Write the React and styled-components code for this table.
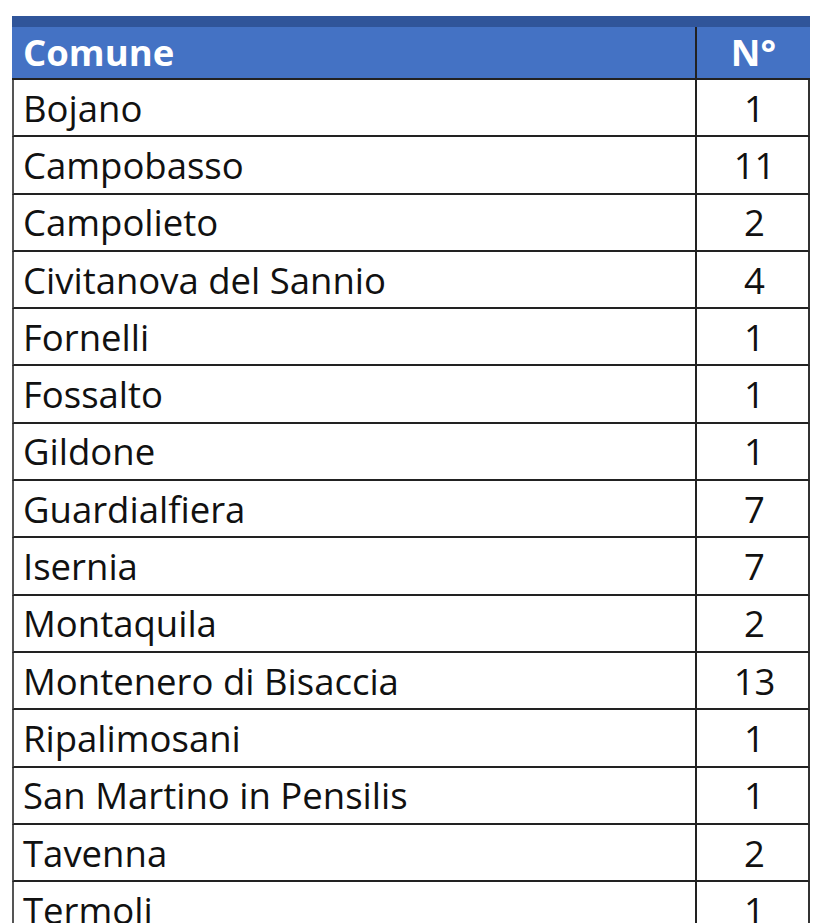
import React from 'react';
import styled, { createGlobalStyle } from 'styled-components';

const GlobalStyle = createGlobalStyle`
  body {
    margin: 0;
    background: #fff;
  }
`;

const Page = styled.div`
  padding: 16px 0 0 12px;
  height: 923px;
  box-sizing: border-box;
  overflow: hidden;
`;

const Sheet = styled.div`
  width: 798px;
  font-family: "Open Sans", "Liberation Sans", sans-serif;
  font-size: 36.5px;
  color: #111;
`;

const TopStrip = styled.div`
  height: 11px;
  background: #30559a;
`;

const Row = styled.div`
  display: grid;
  grid-template-columns: 683px 115px;
  height: ${(p) => (p.$head ? '53px' : '57.3px')};
  box-sizing: border-box;
  background: ${(p) => (p.$head ? '#4472c4' : '#fff')};
  color: ${(p) => (p.$head ? '#fff' : '#111')};
  font-weight: ${(p) => (p.$head ? 700 : 400)};
  border-bottom: 2px solid #222;
  border-left: ${(p) => (p.$head ? 'none' : '2px solid #555')};
  border-right: ${(p) => (p.$head ? 'none' : '2px solid #333')};
`;

const NameCell = styled.div`
  display: flex;
  align-items: center;
  padding-left: ${(p) => (p.$head ? '11px' : '9px')};
  padding-bottom: ${(p) => (p.$head ? '6px' : '0')};
  white-space: nowrap;
  overflow: hidden;
`;

const CountCell = styled.div`
  display: flex;
  align-items: center;
  justify-content: center;
  border-left: 2px solid #222;
  margin-left: ${(p) => (p.$head ? '0' : '-2px')};
  padding-bottom: ${(p) => (p.$head ? '6px' : '0')};
`;

const comuni = [
  ['Bojano', 1],
  ['Campobasso', 11],
  ['Campolieto', 2],
  ['Civitanova del Sannio', 4],
  ['Fornelli', 1],
  ['Fossalto', 1],
  ['Gildone', 1],
  ['Guardialfiera', 7],
  ['Isernia', 7],
  ['Montaquila', 2],
  ['Montenero di Bisaccia', 13],
  ['Ripalimosani', 1],
  ['San Martino in Pensilis', 1],
  ['Tavenna', 2],
  ['Termoli', 1],
];

export default function App() {
  return (
    <>
      <GlobalStyle />
      <Page>
        <Sheet>
          <TopStrip />
          <Row $head>
            <NameCell $head>Comune</NameCell>
            <CountCell $head>N°</CountCell>
          </Row>
          {comuni.map(([nome, n]) => (
            <Row key={nome}>
              <NameCell>{nome}</NameCell>
              <CountCell>{n}</CountCell>
            </Row>
          ))}
        </Sheet>
      </Page>
    </>
  );
}
